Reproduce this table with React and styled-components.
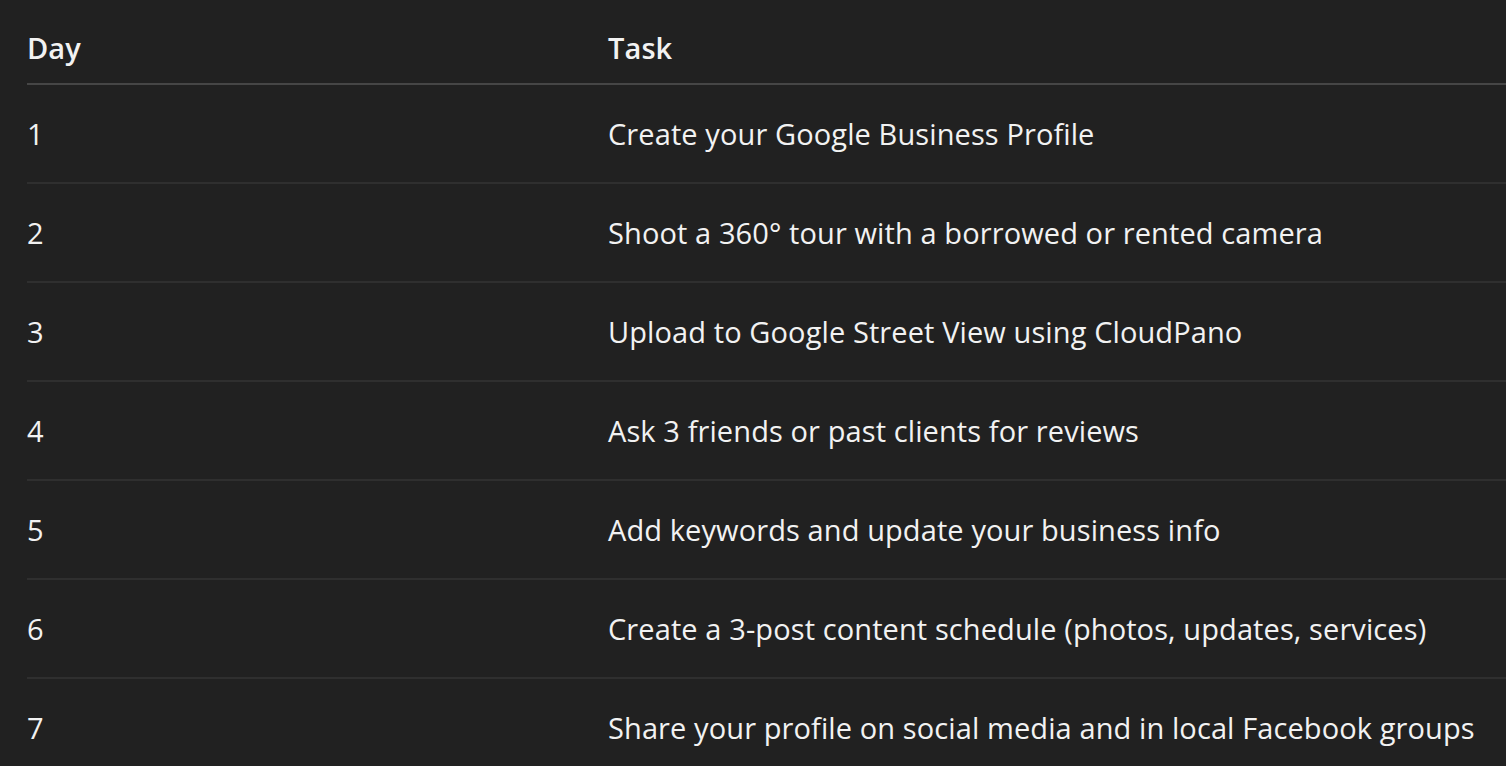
import React from 'react';
import styled, { createGlobalStyle } from 'styled-components';

const GlobalStyle = createGlobalStyle`
	html, body {
		margin: 0;
		padding: 0;
		background: #212121;
	}
	body {
		font-family: "Open Sans", "Noto Sans", sans-serif;
		color: #f2f2f2;
	}
`;

const plan = [
	{ day: 1, task: "Create your Google Business Profile" },
	{ day: 2, task: "Shoot a 360° tour with a borrowed or rented camera" },
	{ day: 3, task: "Upload to Google Street View using CloudPano" },
	{ day: 4, task: "Ask 3 friends or past clients for reviews" },
	{ day: 5, task: "Add keywords and update your business info" },
	{ day: 6, task: "Create a 3-post content schedule (photos, updates, services)" },
	{ day: 7, task: "Share your profile on social media and in local Facebook groups" },
];

export default function App () {
	return (
		<Page>
			<GlobalStyle />
			<Table>
				<thead>
					<HeadRow>
						<HeadCell $first>Day</HeadCell>
						<HeadCell>Task</HeadCell>
					</HeadRow>
				</thead>
				<tbody>
					{ plan.map( ( row ) => (
						<Row key={ row.day }>
							<Cell $first>{ row.day }</Cell>
							<Cell>{ row.task }</Cell>
						</Row>
					) ) }
				</tbody>
			</Table>
		</Page>
	);
}

const Page = styled.div`
	padding: 0 0 0 27px;
	min-height: 100vh;
	box-sizing: border-box;
	overflow: hidden;
`;

const Table = styled.table`
	width: calc(100% + 40px);
	border-collapse: collapse;
	font-size: 29px;
	letter-spacing: 0.1px;
	text-align: left;
`;

const HeadRow = styled.tr`
	border-bottom: 2px solid #464646;
`;

const HeadCell = styled.th`
	font-weight: 600;
	padding: 34px 0 21px 0;
	width: ${ ( p ) => ( p.$first ? "581px" : "auto" ) };
	line-height: 28px;
`;

const Row = styled.tr`
	border-bottom: 2px solid #2f2f2f;
`;

const Cell = styled.td`
	font-weight: 400;
	padding: 35px 0 34px 0;
	line-height: 28px;
	white-space: nowrap;
`;
